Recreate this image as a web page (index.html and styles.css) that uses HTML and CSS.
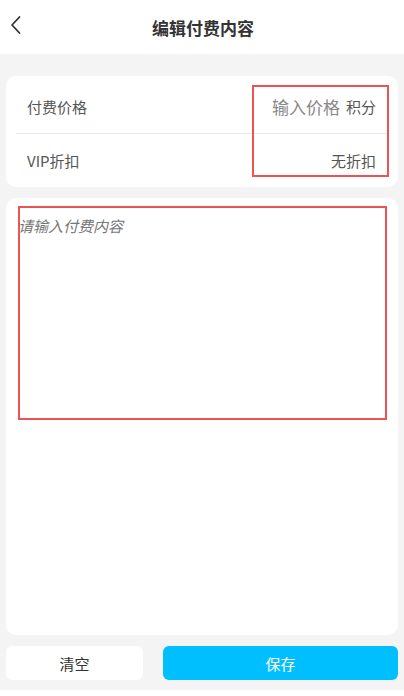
FILE: index.html
```html
<!DOCTYPE html>
<html lang="zh">
<head>
<meta charset="utf-8">
<link rel="stylesheet" href="styles.css">
</head>
<body>
<header class="topbar">
  <svg class="back" width="12" height="20" viewBox="0 0 12 20"><path d="M9.5 2 L2 10 L9.5 18" fill="none" stroke="#333" stroke-width="1.8" stroke-linecap="round" stroke-linejoin="round"/></svg>
  <h1 class="title">编辑付费内容</h1>
</header>
<main class="content">
  <section class="card settings">
    <div class="row first">
      <span class="label">付费价格</span>
      <span class="value"><span class="ph">输入价格</span><span class="unit">积分</span></span>
    </div>
    <div class="row">
      <span class="label">VIP折扣</span>
      <span class="value">无折扣</span>
    </div>
    <div class="mark mark-a"></div>
  </section>
  <section class="card editor">
    <div class="placeholder">请输入付费内容</div>
    <div class="mark mark-b"></div>
  </section>
  <div class="actions">
    <button class="btn clear">清空</button>
    <button class="btn save">保存</button>
  </div>
</main>
</body>
</html>
```
FILE: styles.css
```css
html, body {
  margin: 0;
  padding: 0;
  background: #fff;
  font-family: "Noto Sans CJK SC", "Noto Sans", sans-serif;
}
body {
  width: 404px;
  height: 696px;
  overflow: hidden;
}
.topbar {
  height: 54px;
  background: #fff;
  display: flex;
  align-items: center;
  justify-content: center;
  position: relative;
}
.back {
  position: absolute;
  left: 10px;
  top: 15px;
}
.title {
  margin: 0;
  font-size: 17px;
  font-weight: 700;
  color: #333;
  transform: translateX(1px);
}
.content {
  background: #f4f4f4;
  padding: 22px 6px 10px;
  display: flex;
  flex-direction: column;
  gap: 11px;
}
.card {
  background: #fff;
  border-radius: 10px;
  position: relative;
}
.settings {
  padding: 3px 10px 0;
  height: 108px;
}
.row {
  height: 53px;
  display: flex;
  align-items: center;
  justify-content: space-between;
  padding: 0 12px 0 11px;
}
.row.first {
  height: 54px;
  border-bottom: 1px solid #e8e8e8;
}
.label {
  font-size: 15px;
  color: #555;
}
.value {
  font-size: 15px;
  color: #555;
  display: flex;
  align-items: center;
}
.ph {
  font-size: 17px;
  color: #888;
  margin-right: 6px;
}
.unit {
  font-size: 15px;
  color: #555;
}
.editor {
  height: 437px;
}
.placeholder {
  font-size: 15px;
  font-style: italic;
  color: #777;
  padding: 17px 0 0 12px;
}
.mark {
  position: absolute;
  border: 2.5px solid #ea5456;
  box-sizing: border-box;
}
.mark-a {
  left: 246px;
  top: 9px;
  width: 137px;
  height: 92px;
}
.mark-b {
  left: 12px;
  top: 8px;
  width: 369px;
  height: 214px;
}
.actions {
  display: flex;
  gap: 20px;
}
.btn {
  height: 34px;
  border: none;
  border-radius: 6px;
  font-family: "Noto Sans CJK SC", "Noto Sans", sans-serif;
  font-size: 15px;
  padding: 0;
}
.clear {
  width: 137px;
  background: #fff;
  color: #333;
}
.save {
  flex: 1;
  background: #00bfff;
  color: #fff;
}
```
